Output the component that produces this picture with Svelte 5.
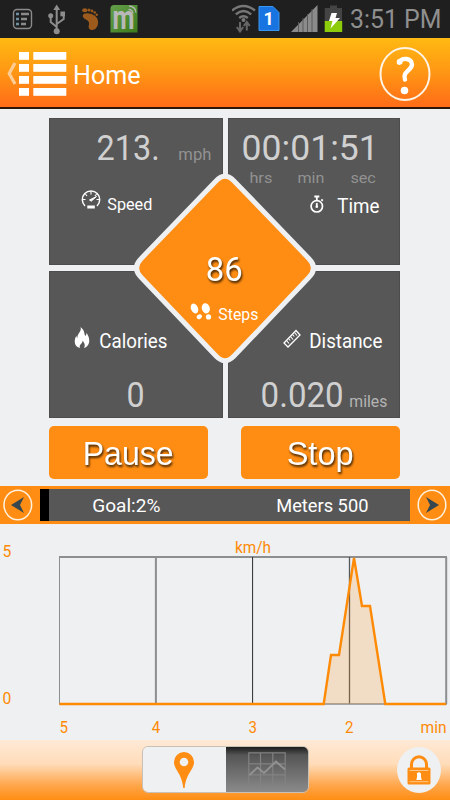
<script>
  let goal = $state(2);
  let view = $state('chart');
  let paused = $state(false);

  const speed = [
    [59.5, 180], [323.7, 180], [331, 131], [339, 131], [354, 34],
    [362, 82], [370, 82], [385.3, 180], [446, 180]
  ];
  const line = speed.map((p) => p.join(',')).join(' ');
  const ticks = [
    { x: 60, text: '5' },
    { x: 152.3, text: '4' },
    { x: 249, text: '3' },
    { x: 345.5, text: '2' }
  ];
</script>

<!-- text condensed to a given width, the box ends on the baseline -->
{#snippet label(text, width, size, cls = '')}
  <svg class="label {cls}" {width} height={Math.round(size * 0.711)}>
    <text
      x={-size * 0.04}
      y={Math.round(size * 0.711)}
      font-size={size}
      textLength={width + size * 0.06}
      lengthAdjust="spacingAndGlyphs">{text}</text>
  </svg>
{/snippet}

<div class="screen">
  <div class="status">
    <svg class="status-left" width="140" height="38">
      <rect x="13.5" y="9.5" width="18" height="19" rx="3.5" fill="none" stroke="#8a8a8a" stroke-width="1.4" />
      <path d="M16 14h3M16 19h3M16 24h3" stroke="#6d8fa0" stroke-width="2.4" />
      <path d="M21 14h8M21 19h6M21 24h5" stroke="#8a8a8a" stroke-width="2.4" />
      <g fill="none" stroke="#8d8d8d" stroke-width="2">
        <path d="M56.7 9v23M56.7 27l-6-5v-5M56.7 24l7-5v-4" />
      </g>
      <path d="M56.7 4.5l3.4 5.5h-6.8z" fill="#8d8d8d" />
      <circle cx="56.7" cy="31.3" r="3" fill="#8d8d8d" />
      <circle cx="50.7" cy="15.8" r="2.5" fill="#8d8d8d" />
      <rect x="60.4" y="11.5" width="4.6" height="4.8" fill="#8d8d8d" />
      <g fill="#9c5a1c">
        <path d="M82.800 15.500c.5-2.500 4-2.800 8-1.800 5 1.500 7.500 5 7.300 9-.2 4-2.500 7.200-6 7.200-3 0-4-2.500-3.200-5 .8-2.500-.5-4.500-3-5.500-2-.8-3.400-2-3.100-3.900z" />
        <ellipse cx="84.800" cy="10.200" rx="2.700" ry="2" />
        <circle cx="89" cy="10" r="1.500" />
        <circle cx="92" cy="11" r="1.400" />
        <circle cx="94.700" cy="12.500" r="1.300" />
        <circle cx="96.700" cy="14.700" r="1.200" />
      </g>
      <defs>
        <linearGradient id="green" x1="0" y1="0" x2="1" y2="1">
          <stop offset="0" stop-color="#64a04a" />
          <stop offset="1" stop-color="#3c7a1c" />
        </linearGradient>
      </defs>
      <path d="M114 5h23.500v27.500h-27v-24q0-3.500 3.500-3.500z" fill="url(#green)" />
      <text x="112.500" y="29" font-size="33" font-weight="700" fill="#b8b8b8" textLength="22" lengthAdjust="spacingAndGlyphs">m</text>
      <path d="M128.500 9.500q4 0 4.500 4M129 6q6.500.5 7 6.500" fill="none" stroke="#b4b4b4" stroke-width="1.300" />
    </svg>
    <svg class="status-right" width="118" height="38">
      <g fill="none" stroke="#777" stroke-width="2.400">
        <path d="M0 10.500q11.500-9 23 0M3.800 14.300q7.700-6.500 15.400 0M7.200 18q4.300-3.600 8.600 0" />
      </g>
      <circle cx="11.500" cy="20" r="2" fill="#777" />
      <path d="M8 22v8M4.800 27l3.200 4.500 3.200-4.500M14.800 30.500v-8M11.800 26l3-4 3 4" fill="none" stroke="#666" stroke-width="2" />
      <path d="M27 6.500h14l6 6v18H27z" fill="#1874e0" stroke="#3a97f0" />
      <text x="31.500" y="25" font-size="18" font-weight="700" fill="#fff">1</text>
      <path d="M59 32L85.500 5v27z" fill="#8b8b8b" />
      <path d="M66.500 22v10M71 18v14M75.500 14v18M80 9v23" stroke="#5a5a5a" stroke-width="1" />
      <path d="M98 5.500h7v2.500h5v13.500H92.700V8H98z" fill="#444" />
      <path d="M92.700 21h17.500v11H92.700z" fill="#8ccc0a" />
      <path d="M99.500 13h5.500l-1.500 5h4.500l-9.500 10.500 2-7.500H97z" fill="#fff" />
    </svg>
    {@render label('3:51 PM', 90, 25.5, 'clock')}
  </div>

  <header class="topbar">
    <svg width="62" height="46">
      <path d="M9 13l-5.800 10.500L9 34" fill="none" stroke="#ffcd94" stroke-width="3.200" />
      <g fill="#fff">
        {#each [2, 14, 26, 38] as y}
          <rect x="13" {y} width="10" height="7.800" />
          <rect x="27.300" {y} width="33" height="7.800" />
        {/each}
      </g>
    </svg>
    {@render label('Home', 66, 26, 'white title')}
    <svg class="help" width="54" height="56">
      <ellipse cx="27" cy="28" rx="24.500" ry="26" fill="none" stroke="#fff3e4" stroke-width="2" />
      <path d="M21 16.500c3-5.500 13-4.500 13 2 0 6-10 7-7 15" fill="none" stroke="#fff" stroke-width="4.400" stroke-linecap="round" />
      <circle cx="21.700" cy="15.700" r="2.900" fill="#fff" />
      <circle cx="26.500" cy="44.500" r="3.800" fill="#fff" />
    </svg>
  </header>

  <div class="board">
    <section class="tile speed">
      <div class="row value">{@render label('213.', 61, 35.5)}{@render label('mph', 32, 17, 'unit')}</div>
      <div class="row name">
        <svg width="20" height="20">
          <path d="M4 16a8.700 8.700 0 1 1 12 0" fill="none" stroke="#fff" stroke-width="1.500" />
          <path d="M10 1.500v3M4.300 4l1.800 2M15.700 4l-1.800 2M2 9.500h2.500M18 9.500h-2.500" stroke="#fff" stroke-width="1.100" />
          <path d="M15.500 6.500l-5.300 4.700-1.700-1.200z" fill="#fff" stroke="#fff" />
          <rect x="6.300" y="15.500" width="7.500" height="3" fill="#fff" />
        </svg>
        {@render label('Speed', 44, 17, 'white')}
      </div>
    </section>

    <section class="tile time">
      <div class="row value">{@render label('00:01:51', 135, 35)}</div>
      <div class="row units">
        {@render label('hrs', 22, 15.5, 'unit')}
        {@render label('min', 26, 15.5, 'unit')}
        {@render label('sec', 24.500, 15.5, 'unit')}
      </div>
      <div class="row name">
        <svg width="14" height="18">
          <circle cx="6.800" cy="11.300" r="5.700" fill="none" stroke="#fff" stroke-width="1.700" />
          <path d="M4.300 1.500h5M6.800 1v5M6.800 8v4M11.300 4.500l1.500 1.300" stroke="#fff" stroke-width="1.800" />
          <circle cx="6.800" cy="11.700" r="1.300" fill="#fff" />
        </svg>
        {@render label('Time', 41, 20, 'white')}
      </div>
    </section>

    <section class="tile calories">
      <div class="row name">
        <svg width="16" height="21">
          <path d="M6.500 0c5 4 3 6.500 5 9 .8-.8 1-2 .8-3.200 3.500 4.500 4.300 10.500.2 14-.8.700-1.500 1-2.500 1.200 1.500-3 .5-5-1.500-7.500.2 2-.6 2.700-1.800 3.700-1 .9-1.300 2.300-.7 3.800C1 20 .2 15.500 1 12c.3-1.500.8-2.500 1.500-3.300 0 1 .2 1.800 1 2.300C3 6.500 8 5 6.500 0z" fill="#fff" />
        </svg>
        {@render label('Calories', 67, 19.500, 'white')}
      </div>
      <div class="row value">{@render label('0', 16, 35)}</div>
    </section>

    <section class="tile distance">
      <div class="row name">
        <svg width="18" height="19">
          <path d="M1 14L13 1.500l4 4.500L5 18z" fill="none" stroke="#fff" stroke-width="1.300" />
          <path d="M3.500 11.500l2.500 3M5.500 9.500l1.800 2M7.500 7.500l2.500 3M9.500 5.500l1.800 2M11.500 3.500l2.500 3" stroke="#fff" stroke-width="1.100" />
        </svg>
        {@render label('Distance', 72, 19.500, 'white')}
      </div>
      <div class="row value">{@render label('0.020', 81, 35)}{@render label('miles', 37, 17, 'unit light')}</div>
    </section>

    <div class="diamond">
      <svg class="shape" width="190" height="196">
        <path
          d="M11 88.700L86 10.900Q95 1.500 104 10.900L179 88.700Q188 98 179 107.300L104 186Q95 195.400 86 186L11 107.300Q2 98 11 88.700z"
          fill="#ff8d13" stroke="#eef0f2" stroke-width="5" />
      </svg>
      {@render label('86', 35, 34, 'white shadow count')}
      <div class="row steps">
        <svg width="22" height="17" fill="#fff">
          <ellipse cx="4.500" cy="5.500" rx="3.500" ry="5.200" transform="rotate(-22 4.500 5.500)" />
          <ellipse cx="9.300" cy="13.700" rx="2.700" ry="2.300" transform="rotate(-30 9.300 13.700)" />
          <ellipse cx="15.800" cy="5.300" rx="4" ry="5.200" transform="rotate(-15 15.800 5.300)" />
          <ellipse cx="18.500" cy="13.900" rx="2.600" ry="2.600" />
        </svg>
        {@render label('Steps', 39, 16, 'white')}
      </div>
    </div>
  </div>

  <div class="buttons">
    <button onclick={() => (paused = !paused)}>{@render label(paused ? 'Resume' : 'Pause', 89, 34, 'white shadow')}</button>
    <button onclick={() => (paused = true)}>{@render label('Stop', 65, 34, 'white shadow')}</button>
  </div>

  <div class="goal">
    <svg class="arrow" width="30" height="32">
      <ellipse cx="14.800" cy="16" rx="13.800" ry="14.700" fill="none" stroke="#fff1de" stroke-width="1.500" />
      <path d="M8 16l13-8-4 8 4 8z" fill="#37474f" />
    </svg>
    <div class="track">
      <div class="done" style="width: {goal * 1.2}%"></div>
      {@render label(`Goal:${goal}%`, 67, 19, 'white goal-text')}
      {@render label('Meters 500', 91, 19, 'white')}
    </div>
    <svg class="arrow" width="30" height="32">
      <ellipse cx="15" cy="16" rx="13.800" ry="14.700" fill="none" stroke="#fff1de" stroke-width="1.500" />
      <path d="M22 16L9 8l4 8-4 8z" fill="#37474f" />
    </svg>
  </div>

  <svg class="chart" width="450" height="216">
    <g fill="none" stroke="#8c8e90" stroke-width="2">
      <path d="M59 33h388M155.900 33v147M446.200 33v147" />
      <path d="M59.500 33v147" stroke-width="1" />
      <path d="M252.600 33v147" stroke="#2c2c2c" stroke-width="1" />
      <path d="M349.500 33v147" stroke="#55575a" stroke-width="1.300" />
      <path d="M59 180h388" stroke-width="1.500" />
    </g>
    <polygon points={line} fill="#ff8c12" fill-opacity=".2" />
    <polyline points={line} fill="none" stroke="#ff8a05" stroke-width="2.400" />
    <g class="axis" fill="#ff8a05" font-size="16">
      <text x="235" y="28.700" textLength="36" lengthAdjust="spacingAndGlyphs">km/h</text>
      <text x="2.500" y="33" textLength="8.800" lengthAdjust="spacingAndGlyphs">5</text>
      <text x="2.500" y="180" textLength="8.800" lengthAdjust="spacingAndGlyphs">0</text>
      {#each ticks as tick}
        <text x={tick.x - 0.500} y="209" textLength="8.500" lengthAdjust="spacingAndGlyphs">{tick.text}</text>
      {/each}
      <text x="420.500" y="209" textLength="26" lengthAdjust="spacingAndGlyphs">min</text>
    </g>
  </svg>

  <footer class="bottom">
    <div class="toggle">
      <button class="map" onclick={() => (view = 'map')} aria-label="map">
        <svg width="22" height="38">
          <path d="M11 1a10 10 0 0 1 10 10c0 8-8 11-9.300 26h-1.400C9 22 1 19 1 11A10 10 0 0 1 11 1zm0 5.700a4.300 4.300 0 1 0 0 8.600 4.300 4.300 0 0 0 0-8.600z" fill="#ff8d13" />
        </svg>
      </button>
      <button class="graph" class:active={view === 'chart'} onclick={() => (view = 'chart')} aria-label="chart">
        <svg width="38" height="35" fill="none" stroke="#828282" stroke-width="1.200">
          <path d="M.8.800h36.400v33H.8zM12.500.800v33M24.800.800v33M.8 11.800h36.400M.8 22.800h36.400" />
          <path d="M1.500 23l8-7.500 6.500 5.500L28 9.500l9 8" stroke="#929292" stroke-width="1.800" />
        </svg>
      </button>
    </div>
    <button class="lock" aria-label="lock">
      <svg width="24" height="30">
        <path d="M4.500 13V9.500a7.500 7.800 0 0 1 15 0V13" fill="none" stroke="#ff8d13" stroke-width="3" />
        <rect x=".5" y="12.500" width="23" height="17" rx="1.500" fill="#ff8d13" />
        <path d="M2.500 15.500h19M2.500 26.700h19" stroke="#ffc98a" />
        <path d="M9.800 18.500q2.200-2.500 4.200 0v3.500l.8 3H9.300l.8-3v-2z" fill="#fff" />
      </svg>
    </button>
  </footer>
</div>

<style>
  :global(body) {
    background: #eef0f2;
  }

  .screen {
    width: 450px;
    height: 800px;
    overflow: hidden;
    display: flex;
    flex-direction: column;
    background: #eef0f2;
    font-family: Roboto, 'Noto Sans', sans-serif;
  }

  svg {
    display: block;
    flex: none;
  }

  button {
    border: none;
    padding: 0;
    margin: 0;
    cursor: pointer;
    display: flex;
    align-items: center;
    justify-content: center;
  }

  .label {
    overflow: visible;
    fill: #d0d0d0;
  }

  .label.unit {
    fill: #929292;
  }

  .label.light {
    fill: #b4b4b4;
  }

  .label.white {
    fill: #fff;
  }

  .label.shadow {
    filter: drop-shadow(1.5px 2px 1px rgba(0, 0, 0, 0.75));
  }

  .status {
    height: 38px;
    display: flex;
    background: #1f1f1f;
  }

  .status-right {
    margin-left: 92px;
  }

  .status :global(.clock) {
    margin: 10px 0 0 1px;
    fill: #8f8f8f;
  }

  .topbar {
    height: 69px;
    display: flex;
    align-items: center;
    padding: 0 18px 0 6px;
    box-sizing: border-box;
    background: linear-gradient(#ffb912, #ff9614 50%, #ff6c18);
    box-shadow: 0 2px 0 #2b1608;
  }

  .topbar svg:first-child {
    margin-right: 6px;
  }

  .topbar :global(.title) {
    margin-top: 4px;
  }

  .help {
    margin-left: auto;
    margin-top: 3px;
  }

  .board {
    position: relative;
    display: grid;
    grid-template-columns: 174px 172px;
    grid-template-rows: 147px 147px;
    gap: 6px 5px;
    width: 351px;
    margin: 11px 0 0 49px;
  }

  .tile {
    background: #575757;
    box-shadow: inset 0 0 0 1px #4d4d4d;
  }

  .row {
    display: flex;
    align-items: flex-end;
  }

  .speed .value {
    padding: 17px 0 0 49px;
    gap: 20px;
  }

  .speed .name {
    padding: 30px 0 0 32px;
    gap: 7px;
  }

  .time .value {
    padding: 17px 0 0 15px;
  }

  .time .units {
    padding: 12px 25px 0 22px;
    justify-content: space-between;
  }

  .time .name {
    padding: 12px 0 0 82px;
    gap: 14px;
  }

  .calories .name {
    padding: 56px 0 0 25px;
    gap: 10px;
  }

  .calories .value {
    padding: 34px 0 0 79px;
  }

  .distance .name {
    padding: 58px 0 0 55px;
    gap: 9px;
  }

  .distance .value {
    padding: 34px 0 0 34px;
    gap: 7px;
  }

  .diamond {
    position: absolute;
    left: 81px;
    top: 52px;
    width: 190px;
    height: 196px;
    display: flex;
    flex-direction: column;
    align-items: center;
    padding-top: 87px;
    box-sizing: border-box;
  }

  .shape {
    position: absolute;
    left: 0;
    top: 0;
  }

  .diamond :global(.label),
  .steps {
    position: relative;
  }

  .diamond :global(.count) {
    margin-right: 2px;
  }

  .steps {
    gap: 7px;
    margin: 22px 2px 0 0;
  }

  .buttons {
    display: flex;
    justify-content: space-between;
    margin: 8px 50px 0 49px;
  }

  .buttons button {
    width: 159px;
    height: 53px;
    border-radius: 5px;
    background: #ff8d13;
  }

  .goal {
    height: 38px;
    margin-top: 7px;
    display: flex;
    align-items: center;
    justify-content: space-between;
    padding: 0 3px;
    background: #ff8d13;
  }

  .track {
    width: 370px;
    height: 32px;
    display: flex;
    align-items: center;
    background: #575757;
  }

  .done {
    align-self: stretch;
    background: #000;
    margin-right: 44px;
  }

  .track :global(.goal-text) {
    margin-right: 117px;
  }

  .bottom {
    height: 60px;
    display: flex;
    justify-content: space-between;
    padding-left: 142px;
    padding-right: 9px;
    background: linear-gradient(#ffe9d6, #ffdcb9 40%, #ffa64c 75%, #ff8d13);
  }

  .toggle {
    display: flex;
    width: 167px;
    height: 47px;
    margin-top: 6px;
    border-radius: 6px;
    overflow: hidden;
    border: 1px solid #c9c0b8;
    box-sizing: border-box;
  }

  .toggle button {
    flex: 1;
  }

  .map {
    background: #eef0f2;
  }

  .graph {
    background: #8a8a8a;
  }

  .graph.active {
    background: linear-gradient(#1c1c1c, #555 18%, #8a8a8a);
  }

  .lock {
    width: 44px;
    height: 46px;
    margin-top: 7px;
    border-radius: 50%;
    background: #eef0f2;
  }
</style>
